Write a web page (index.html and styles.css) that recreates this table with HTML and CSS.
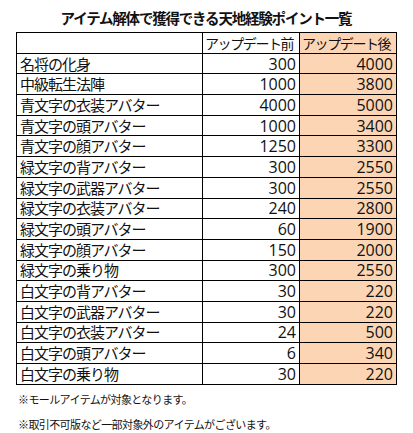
FILE: index.html
```html
<!DOCTYPE html>
<html lang="ja">
<head>
    <meta charset="UTF-8" />
    <meta name="viewport" content="width=device-width, initial-scale=1.0" />
    <title>天地経験ポイント一覧</title>
    <link rel="stylesheet" href="styles.css">
</head>
<body>
    <div class="sheet">
        <h1 class="title">アイテム解体で獲得できる天地経験ポイント一覧</h1>
        <table class="points">
            <colgroup>
                <col class="col-name">
                <col class="col-before">
                <col class="col-after">
            </colgroup>
            <thead>
                <tr>
                    <th class="name"></th>
                    <th class="before">アップデート前</th>
                    <th class="after">アップデート後</th>
                </tr>
            </thead>
            <tbody>
                <tr><td class="name">名将の化身</td><td class="before">300</td><td class="after">4000</td></tr>
                <tr><td class="name">中級転生法陣</td><td class="before">1000</td><td class="after">3800</td></tr>
                <tr><td class="name">青文字の衣装アバター</td><td class="before">4000</td><td class="after">5000</td></tr>
                <tr><td class="name">青文字の頭アバター</td><td class="before">1000</td><td class="after">3400</td></tr>
                <tr><td class="name">青文字の顔アバター</td><td class="before">1250</td><td class="after">3300</td></tr>
                <tr><td class="name">緑文字の背アバター</td><td class="before">300</td><td class="after">2550</td></tr>
                <tr><td class="name">緑文字の武器アバター</td><td class="before">300</td><td class="after">2550</td></tr>
                <tr><td class="name">緑文字の衣装アバター</td><td class="before">240</td><td class="after">2800</td></tr>
                <tr><td class="name">緑文字の頭アバター</td><td class="before">60</td><td class="after">1900</td></tr>
                <tr><td class="name">緑文字の顔アバター</td><td class="before">150</td><td class="after">2000</td></tr>
                <tr><td class="name">緑文字の乗り物</td><td class="before">300</td><td class="after">2550</td></tr>
                <tr><td class="name">白文字の背アバター</td><td class="before">30</td><td class="after">220</td></tr>
                <tr><td class="name">白文字の武器アバター</td><td class="before">30</td><td class="after">220</td></tr>
                <tr><td class="name">白文字の衣装アバター</td><td class="before">24</td><td class="after">500</td></tr>
                <tr><td class="name">白文字の頭アバター</td><td class="before">6</td><td class="after">340</td></tr>
                <tr><td class="name">白文字の乗り物</td><td class="before">30</td><td class="after">220</td></tr>
            </tbody>
        </table>
        <p class="note">※モールアイテムが対象となります。</p>
        <p class="note">※取引不可版など一部対象外のアイテムがございます。</p>
    </div>
</body>
</html>
```

FILE: styles.css
```css
body {
    margin: 0;
    background: #fff;
    color: #111;
    font-family: "Noto Sans CJK JP", "Noto Sans", sans-serif;
}
.sheet {
    padding: 8px 0 0 16px;
    width: 380px;
}
.title {
    margin: 0 0 4px;
    font-size: 14.5px;
    line-height: 20px;
    font-weight: bold;
    text-align: center;
    letter-spacing: -1.2px;
}
.points {
    border-collapse: collapse;
    table-layout: fixed;
    width: 380px;
}
.col-name {
    width: 186px;
}
.col-before {
    width: 97px;
}
.col-after {
    width: 97px;
}
.points tr {
    height: 20.7px;
}
.points th,
.points td {
    box-sizing: border-box;
    border: 1px solid #000;
    padding: 0 3px;
    font-size: 15px;
    line-height: 18px;
    font-weight: normal;
    letter-spacing: -1px;
    white-space: nowrap;
    overflow: hidden;
}
.points .name {
    text-align: left;
}
.points .before {
    text-align: right;
}
.points .after {
    text-align: right;
    background: #fcd5b4;
}
.points th.before,
.points th.after {
    text-align: left;
    padding-left: 2px;
    font-size: 14px;
    letter-spacing: -1.4px;
}
.points td.before,
.points td.after {
    letter-spacing: 0;
    font-family: "Open Sans", sans-serif;
    font-size: 16px;
}
.note {
    margin: 4px 0 0 2px;
    font-size: 11px;
    line-height: 21px;
    letter-spacing: -0.6px;
}
.note + .note {
    margin-top: 4px;
}
```
